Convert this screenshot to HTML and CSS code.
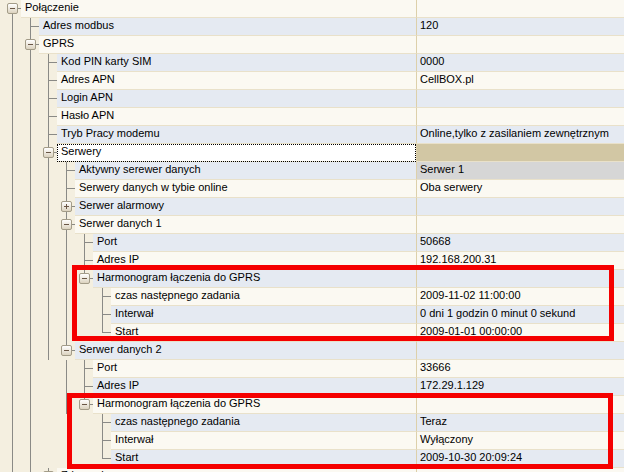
FILE: index.html
```html
<!DOCTYPE html>
<html lang="pl">
<head>
    <meta charset="UTF-8">
    <title>Konfiguracja</title>
    <link rel="stylesheet" href="styles.css">
</head>
<body>
    <div id="grid">
        <div class="row">
            <div class="name"><span class="g down"><span class="box"></span></span><div class="label">Połączenie</div></div>
            <div class="value"></div>
        </div>
        <div class="row b">
            <div class="name"><span class="g pipe"></span><span class="g tee"></span><div class="label">Adres modbus</div></div>
            <div class="value">120</div>
        </div>
        <div class="row">
            <div class="name"><span class="g pipe"></span><span class="g tee"><span class="box"></span></span><div class="label">GPRS</div></div>
            <div class="value"></div>
        </div>
        <div class="row b">
            <div class="name"><span class="g pipe"></span><span class="g pipe"></span><span class="g tee"></span><div class="label">Kod PIN karty SIM</div></div>
            <div class="value">0000</div>
        </div>
        <div class="row">
            <div class="name"><span class="g pipe"></span><span class="g pipe"></span><span class="g tee"></span><div class="label">Adres APN</div></div>
            <div class="value">CellBOX.pl</div>
        </div>
        <div class="row b">
            <div class="name"><span class="g pipe"></span><span class="g pipe"></span><span class="g tee"></span><div class="label">Login APN</div></div>
            <div class="value"></div>
        </div>
        <div class="row">
            <div class="name"><span class="g pipe"></span><span class="g pipe"></span><span class="g tee"></span><div class="label">Hasło APN</div></div>
            <div class="value"></div>
        </div>
        <div class="row b">
            <div class="name"><span class="g pipe"></span><span class="g pipe"></span><span class="g tee"></span><div class="label">Tryb Pracy modemu</div></div>
            <div class="value">Online,tylko z zasilaniem zewnętrznym</div>
        </div>
        <div class="row sel">
            <div class="name"><span class="g pipe"></span><span class="g pipe"></span><span class="g tee"><span class="box"></span></span><div class="label">Serwery</div></div>
            <div class="value"></div>
        </div>
        <div class="row b">
            <div class="name"><span class="g pipe"></span><span class="g pipe"></span><span class="g pipe"></span><span class="g tee"></span><div class="label">Aktywny serewer danych</div></div>
            <div class="value grey">Serwer 1</div>
        </div>
        <div class="row">
            <div class="name"><span class="g pipe"></span><span class="g pipe"></span><span class="g pipe"></span><span class="g tee"></span><div class="label">Serwery danych w tybie online</div></div>
            <div class="value">Oba serwery</div>
        </div>
        <div class="row b">
            <div class="name"><span class="g pipe"></span><span class="g pipe"></span><span class="g pipe"></span><span class="g tee"><span class="box plus"></span></span><div class="label">Serwer alarmowy</div></div>
            <div class="value"></div>
        </div>
        <div class="row">
            <div class="name"><span class="g pipe"></span><span class="g pipe"></span><span class="g pipe"></span><span class="g tee"><span class="box"></span></span><div class="label">Serwer danych 1</div></div>
            <div class="value"></div>
        </div>
        <div class="row b">
            <div class="name"><span class="g pipe"></span><span class="g pipe"></span><span class="g pipe"></span><span class="g pipe"></span><span class="g tee"></span><div class="label">Port</div></div>
            <div class="value">50668</div>
        </div>
        <div class="row">
            <div class="name"><span class="g pipe"></span><span class="g pipe"></span><span class="g pipe"></span><span class="g pipe"></span><span class="g tee"></span><div class="label">Adres IP</div></div>
            <div class="value">192.168.200.31</div>
        </div>
        <div class="row b">
            <div class="name"><span class="g pipe"></span><span class="g pipe"></span><span class="g pipe"></span><span class="g pipe"></span><span class="g ell"><span class="box"></span></span><div class="label">Harmonogram łączenia do GPRS</div></div>
            <div class="value"></div>
        </div>
        <div class="row">
            <div class="name"><span class="g pipe"></span><span class="g pipe"></span><span class="g pipe"></span><span class="g pipe"></span><span class="g"></span><span class="g tee"></span><div class="label">czas następnego zadania</div></div>
            <div class="value">2009-11-02 11:00:00</div>
        </div>
        <div class="row b">
            <div class="name"><span class="g pipe"></span><span class="g pipe"></span><span class="g pipe"></span><span class="g pipe"></span><span class="g"></span><span class="g tee"></span><div class="label">Interwał</div></div>
            <div class="value">0 dni 1 godzin 0 minut 0 sekund</div>
        </div>
        <div class="row">
            <div class="name"><span class="g pipe"></span><span class="g pipe"></span><span class="g pipe"></span><span class="g pipe"></span><span class="g"></span><span class="g ell"></span><div class="label">Start</div></div>
            <div class="value">2009-01-01 00:00:00</div>
        </div>
        <div class="row b">
            <div class="name"><span class="g pipe"></span><span class="g pipe"></span><span class="g pipe"></span><span class="g ell"><span class="box"></span></span><div class="label">Serwer danych 2</div></div>
            <div class="value"></div>
        </div>
        <div class="row">
            <div class="name"><span class="g pipe"></span><span class="g pipe"></span><span class="g"></span><span class="g pipe"></span><span class="g tee"></span><div class="label">Port</div></div>
            <div class="value">33666</div>
        </div>
        <div class="row b">
            <div class="name"><span class="g pipe"></span><span class="g pipe"></span><span class="g"></span><span class="g pipe"></span><span class="g tee"></span><div class="label">Adres IP</div></div>
            <div class="value">172.29.1.129</div>
        </div>
        <div class="row">
            <div class="name"><span class="g pipe"></span><span class="g pipe"></span><span class="g"></span><span class="g pipe"></span><span class="g ell"><span class="box"></span></span><div class="label">Harmonogram łączenia do GPRS</div></div>
            <div class="value"></div>
        </div>
        <div class="row b">
            <div class="name"><span class="g pipe"></span><span class="g pipe"></span><span class="g"></span><span class="g"></span><span class="g"></span><span class="g tee"></span><div class="label">czas następnego zadania</div></div>
            <div class="value">Teraz</div>
        </div>
        <div class="row">
            <div class="name"><span class="g pipe"></span><span class="g pipe"></span><span class="g"></span><span class="g"></span><span class="g"></span><span class="g tee"></span><div class="label">Interwał</div></div>
            <div class="value">Wyłączony</div>
        </div>
        <div class="row b">
            <div class="name"><span class="g pipe"></span><span class="g pipe"></span><span class="g"></span><span class="g"></span><span class="g"></span><span class="g ell"></span><div class="label">Start</div></div>
            <div class="value">2009-10-30 20:09:24</div>
        </div>
        <div class="row">
            <div class="name"><span class="g pipe"></span><span class="g pipe"></span><span class="g tee"><span class="box plus"></span></span><div class="label">Zdarzenia</div></div>
            <div class="value"></div>
        </div>

        <!-- red markers drawn over the grid -->
        <div class="mark mark1"></div>
        <div class="mark mark2"></div>
    </div>
</body>
</html>
```

FILE: styles.css
```css
html, body {
    height: 472px;
    overflow: hidden;
}

body {
    margin: 0;
    font-family: "Liberation Sans", Arial, sans-serif;
    font-size: 11px;
    color: #000;
    background-color: #f4efe0;
}

#grid {
    position: relative;
    width: 624px;
}

.row {
    display: flex;
    height: 18px;
}

.name {
    width: 416px;
    flex: none;
    display: flex;
    padding-left: 3px;
    box-sizing: border-box;
}

.g {
    position: relative;
    width: 18px;
    height: 18px;
    flex: none;
}

/* tree lines */
.pipe::before, .tee::before, .ell::before, .down::before {
    content: "";
    position: absolute;
    left: 9px;
    width: 1px;
    background-color: #8a8a86;
}

.pipe::before, .tee::before {
    top: 0;
    bottom: 0;
}

.ell::before {
    top: 0;
    height: 9px;
}

.down::before {
    top: 9px;
    bottom: 0;
}

.tee::after, .ell::after, .down::after {
    content: "";
    position: absolute;
    left: 9px;
    right: 0;
    top: 8px;
    height: 1px;
    background-color: #8a8a86;
}

.box {
    position: absolute;
    z-index: 1;
    left: 4px;
    top: 3px;
    width: 9px;
    height: 9px;
    border: 1px solid #a39c88;
    border-radius: 2px;
    background: linear-gradient(#ffffff, #dcd3bf);
}

.box::before {
    content: "";
    position: absolute;
    left: 2px;
    top: 4px;
    width: 5px;
    height: 1px;
    background-color: #6a5746;
}

.box.plus::after {
    content: "";
    position: absolute;
    left: 4px;
    top: 2px;
    width: 1px;
    height: 5px;
    background-color: #6a5746;
}

.label, .value {
    height: 17px;
    line-height: 14px;
    border-bottom: 1px solid #e9e1ca;
    white-space: nowrap;
    overflow: hidden;
    background-color: #fbf9f2;
}

.label {
    flex: 1;
    padding-left: 4px;
}

.value {
    flex: 1;
    border-left: 1px solid #ddd0aa;
    padding-left: 3px;
}

.row.b .label, .row.b .value {
    background-color: #e5eaf2;
}

.row.sel .label {
    background-color: #fff;
    outline: 1px dotted #000;
    outline-offset: -1px;
}

.row.sel .value {
    background-color: #d2c7a4;
}

.value.grey {
    background-color: #d6d6d6 !important;
}

.mark {
    position: absolute;
    border: 5px solid #f50000;
    box-sizing: border-box;
}

.mark1 {
    left: 72px;
    top: 265px;
    width: 542px;
    height: 76px;
}

.mark2 {
    left: 67px;
    top: 393px;
    width: 546px;
    height: 76px;
}
```
